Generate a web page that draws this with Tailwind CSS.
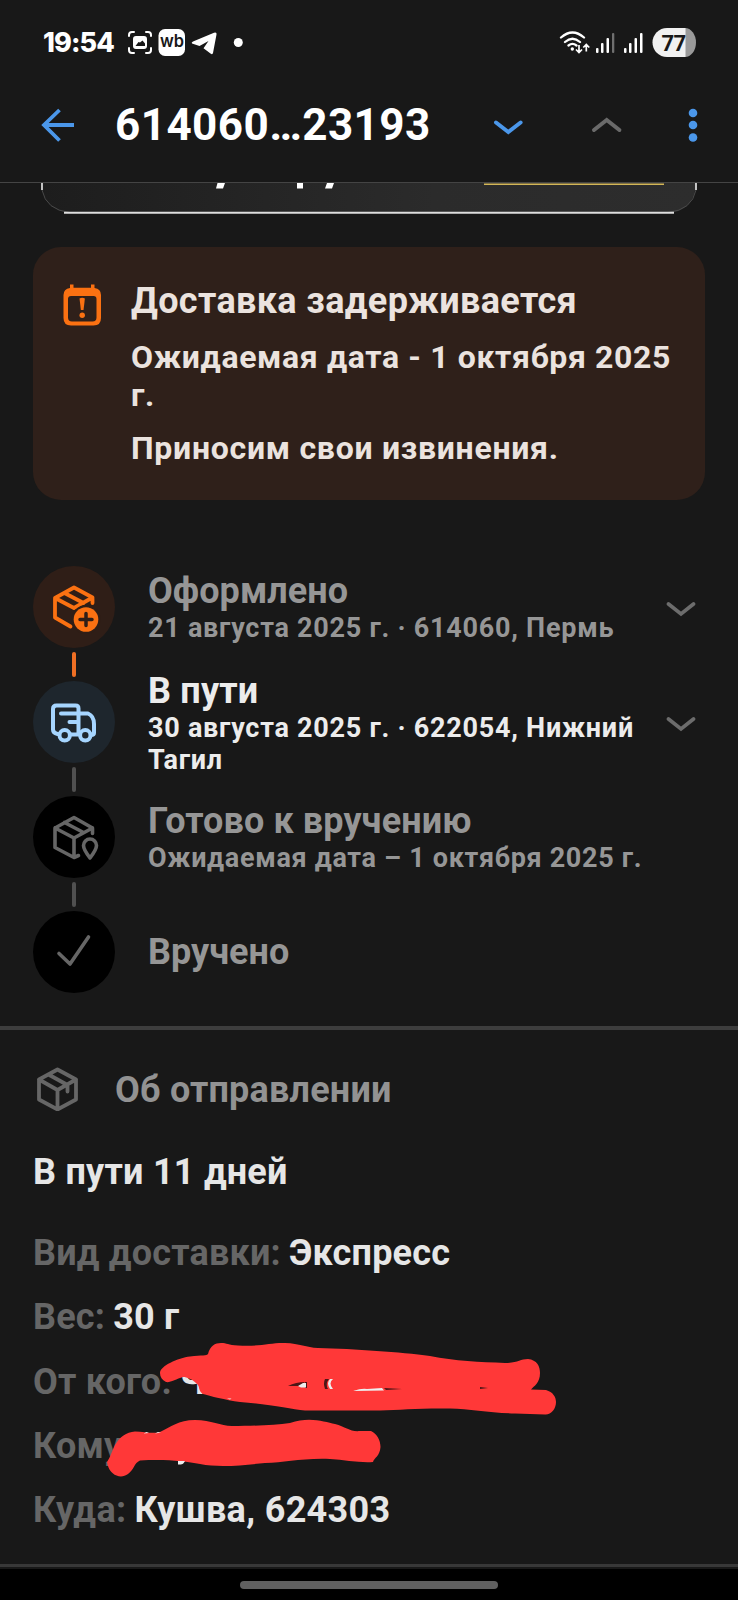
<!DOCTYPE html>
<html lang="ru">
<head>
<meta charset="utf-8">
<title>Отслеживание</title>
<script src="https://cdn.jsdelivr.net/npm/@tailwindcss/browser@4"></script>
</head>
<body class="bg-[#181818]">
<main class="relative flex h-[1600px] w-[738px] flex-col overflow-hidden bg-[#181818] font-[Roboto,sans-serif] font-bold text-[#e6e6e6]">

  <!-- status bar -->
  <div class="flex h-[84px] shrink-0 items-center pl-[43px] pr-[42px]">
    <span class="mt-[2px] w-[85px] font-[Inter,sans-serif] text-[27px] font-extrabold tracking-[-0.9px] text-white">19:54</span>
    <svg class="h-[27px] w-[115px] shrink-0" viewBox="128 29 115 27" fill="none">
      <g stroke="#fff" stroke-width="2" stroke-linecap="round">
        <path d="M129 36v-1q0-3 3-3h2M146 32h2q3 0 3 3v1M151 48v2q0 3-3 3h-2M134 53h-2q-3 0-3-3v-2"/>
      </g>
      <path fill="#fff" fill-rule="evenodd" d="M136 36h8q3 0 3 3v7q0 3-3 3h-8q-3 0-3-3v-7q0-3 3-3zM135.500 46h9.500v-2.500l-2.500-3-2.500 2-1.500-.5z"/>
      <rect x="158.500" y="29" width="26.500" height="27" rx="6.500" fill="#fff"/>
      <text x="160" y="47" font-family="Inter, sans-serif" font-size="17.500" font-weight="600" textLength="24" lengthAdjust="spacingAndGlyphs" fill="#181818">wb</text>
      <path fill="#fff" d="M192 43.500Q191 42.500 193 41.500L214 32.700Q217 31.800 216.500 34.500L213 53Q212.500 55 210.500 53.500L203.500 48.200L208.500 41L199.500 46z"/>
      <circle cx="238.300" cy="42.500" r="4.500" fill="#fff"/>
    </svg>
    <svg class="ml-auto h-[29px] w-[137px]" viewBox="559 28 137 29" fill="none">
      <g stroke="#fff" stroke-width="2.300" stroke-linecap="round">
        <path d="M561 37.500Q572.500 27.500 584 37.500M565 42Q572.500 35.500 580 42M568.500 45.500Q572.500 42.200 576.500 45.500"/>
      </g>
      <circle cx="572.300" cy="49" r="1.700" fill="#fff"/>
      <path stroke="#fff" stroke-width="1.700" d="M579 45v7M576 49.500l3 3 3-3M586.300 51.500v-6.500M583.300 47.500l3-3 3 3"/>
      <g fill="#fff">
        <rect x="596" y="48" width="2.500" height="5" rx="1"/><rect x="601" y="43" width="2.500" height="10" rx="1"/><rect x="606.500" y="38" width="2.500" height="15" rx="1"/><rect x="612" y="33" width="2.300" height="20" rx="1" fill="#6f6f6f"/>
        <rect x="624" y="48" width="2.500" height="5" rx="1"/><rect x="629" y="43" width="2.500" height="10" rx="1"/><rect x="634.500" y="38" width="2.500" height="15" rx="1"/><rect x="640" y="33" width="2.500" height="20" rx="1"/>
      </g>
      <path fill="#9a9a9a" d="M685 28a11 14.500 0 0 1 0 29z"/>
      <path fill="#f1f1f1" d="M667 28h18.500v29h-18.500a14.500 14.500 0 0 1 0-29z"/>
      <text x="661.500" y="50.500" font-family="Roboto, sans-serif" font-size="22" font-weight="700" textLength="24.500" fill="#181818">77</text>
    </svg>
  </div>

  <!-- title bar -->
  <header class="flex h-[99px] shrink-0 items-center border-b border-[#444] pl-[41px] pr-[38px]">
    <svg class="mt-[-16px] h-[34px] w-[34px]" viewBox="41 108 34 34" fill="none" stroke="#4b97ea" stroke-width="3.800"><path d="M74 125H43.500M59.500 110L44 125l15.500 15.500"/></svg>
    <h1 class="mt-[-16px] ml-[40px] w-[377px] text-[44px] leading-[52px] tracking-[0.45px] text-white">614060…23193</h1>
    <svg class="mt-[-16px] h-[36px] w-[208px]" viewBox="492 107 208 36" fill="none" stroke-width="4" stroke-linecap="round">
      <path stroke="#4b97ea" d="M496 122.500l12.300 9.500 12.300-9.500"/>
      <path stroke="#6a6a6a" d="M594 130l12.700-10 12.700 10"/>
      <g fill="#4b97ea"><circle cx="693" cy="113" r="4.300"/><circle cx="693" cy="125" r="4.300"/><circle cx="693" cy="137.500" r="4.300"/></g>
    </svg>
  </header>

  <!-- scrolled-off banner -->
  <div class="flex h-[31px] shrink-0 justify-center">
    <svg class="h-[31px] w-[658px]" viewBox="40 183 658 31" fill="none">
      <defs><linearGradient id="g" x1="0" x2="1"><stop offset="0" stop-color="#1d1d1d"/><stop offset=".6" stop-color="#2b2b2b"/><stop offset="1" stop-color="#2d2d2d"/></linearGradient></defs>
      <path fill="url(#g)" d="M42 183q2 29 29 30h596q27-1 29-30z"/>
      <path stroke="#4a4a4a" d="M42 190q4 20 28 22.500M696 190q-4 20-28 22.500"/>
      <path stroke="#eee" stroke-width="1.600" d="M42 183v7M696 183v7"/>
      <path stroke="#dedede" stroke-width="2" d="M64 212.700h610"/>
      <path fill="#fff" d="M217.500 183h7.500l-2 5.500h-7zM297 183h6v5.500h-6zM327 183h7l-2 5.500h-7z"/>
      <path stroke="#d3b657" stroke-width="1.500" d="M484 184.300h180"/>
    </svg>
  </div>

  <!-- delay notice -->
  <section class="mx-[33px] mt-[33px] flex h-[253px] shrink-0 rounded-[28px] bg-[#2f201a] pl-[30px] text-[#ebe3df]">
    <svg class="mt-[37px] h-[42px] w-[38px] shrink-0" viewBox="63 284 38 42" fill="none">
      <path fill="#fb7112" fill-rule="evenodd" d="M70 284.500h3.500v3.300h17.500v-3.300h3.500v3.500Q101 289 101 295v23q0 7.500-7.500 7.500h-22.500q-7.500 0-7.500-7.500v-23q0-6 6.500-7zM71 296q-3 0-3 3v18.500q0 4 4 4h20.500q4 0 4-4v-18.500q0-3-3-3z"/>
      <path fill="#fb7112" d="M79.500 298.500q2.700-1.500 5.400 0l-1.400 11.500h-2.600z"/><circle cx="82.200" cy="315.300" r="2.700" fill="#fb7112"/>
    </svg>
    <div class="ml-[30px] pt-[33px]">
      <h2 class="text-[36px] leading-[42px] tracking-[0.36px]">Доставка задерживается</h2>
      <p class="mt-[16px] text-[32px] leading-[38px] tracking-[0.64px]">Ожидаемая дата - 1 октября 2025<br>г.</p>
      <p class="mt-[15px] text-[32px] leading-[38px] tracking-[0.72px]">Приносим свои извинения.</p>
    </div>
  </section>

  <!-- tracking timeline -->
  <section class="mt-[66px] flex h-[460px] shrink-0 flex-col gap-[33px] px-[33px] text-[#969696]">
    <div class="flex h-[82px] items-center">
      <div class="relative h-[82px] w-[82px] shrink-0 rounded-full bg-[#2f1e17]">
        <svg class="h-[82px] w-[82px]" viewBox="33 566 82 82" fill="none" stroke="#fb7112" stroke-width="3.800" stroke-linejoin="round" stroke-linecap="round">
          <path d="M92.500 603v-5.500L74 587.500 55 598V617.500L70.500 626.500M55 598l19 10 18.500-10.500M64.500 593l19 10"/>
          <circle cx="86" cy="619.500" r="14.500" fill="#2f1e17" stroke="none"/>
          <circle cx="86" cy="619.500" r="12.300" fill="#fb7112" stroke="none"/>
          <path stroke="#2f1e17" stroke-width="3.500" d="M86 613.500v12M80 619.500h12"/>
        </svg>
        <div class="absolute top-[86px] left-[39px] h-[25px] w-[4px] rounded-full bg-[#ef6f24]"></div>
      </div>
      <div class="ml-[33px] grow whitespace-nowrap"><h3 class="text-[36px] leading-[42px] tracking-[0.05px]">Оформлено</h3><p class="text-[27px] leading-[32px] tracking-[0.74px]">21 августа 2025 г. · 614060, Пермь</p></div>
      <svg class="mt-[3px] mr-[9px] h-[16px] w-[30px]" viewBox="0 0 30 16" fill="none" stroke="#6c6c6c" stroke-width="3.700" stroke-linecap="round"><path d="M2.500 3l12.500 10 12.500-10"/></svg>
    </div>
    <div class="flex h-[82px] items-center">
      <div class="relative h-[82px] w-[82px] shrink-0 rounded-full bg-[#1e262d]">
        <svg class="h-[82px] w-[82px]" viewBox="33 681 82 82" fill="none" stroke="#a6d5ff" stroke-width="4" stroke-linejoin="round" stroke-linecap="round">
          <path d="M57.500 734q-4.500-1-4.500-4.500v-20.500q0-3.500 3.500-3.500h19q3 0 3 3V734M61 713.500h27q6 2.500 6 10.500v9q0 2-3 2M69.500 722h9M71 734.500h8"/>
          <circle cx="64.700" cy="735.300" r="5.200"/><circle cx="85.300" cy="735.300" r="5.200"/>
        </svg>
        <div class="absolute top-[86px] left-[39px] h-[25px] w-[4px] rounded-full bg-[#505050]"></div>
      </div>
      <div class="ml-[33px] mt-px grow whitespace-nowrap text-[#ececec]"><h3 class="text-[36px] leading-[42px] tracking-[0.2px]">В пути</h3><p class="text-[27px] leading-[32px] tracking-[0.74px]">30 августа 2025 г. · 622054, Нижний<br>Тагил</p></div>
      <svg class="mt-[3px] mr-[9px] h-[16px] w-[30px]" viewBox="0 0 30 16" fill="none" stroke="#6c6c6c" stroke-width="3.700" stroke-linecap="round"><path d="M2.500 3l12.500 10 12.500-10"/></svg>
    </div>
    <div class="flex h-[82px] items-center">
      <div class="relative h-[82px] w-[82px] shrink-0 rounded-full bg-black">
        <svg class="h-[82px] w-[82px]" viewBox="33 796 82 82" fill="none" stroke="#666" stroke-width="3.600" stroke-linejoin="round" stroke-linecap="round">
          <path d="M92.500 833.500v-5.500L74 817.500 55 828V847.500L74 857.500L78.500 855.500M74 857V838L55 828M74 838l18.500-10M64.500 822.500l19 10"/>
          <path d="M90 858q-6.500-8.500-6.500-12.500a6.500 6.500 0 0 1 13 0q0 4-6.500 12.500z"/>
        </svg>
        <div class="absolute top-[86px] left-[39px] h-[25px] w-[4px] rounded-full bg-[#505050]"></div>
      </div>
      <div class="ml-[33px] grow whitespace-nowrap"><h3 class="text-[36px] leading-[42px] tracking-[0.1px]">Готово к вручению</h3><p class="text-[27px] leading-[32px] tracking-[0.68px]">Ожидаемая дата – 1 октября 2025 г.</p></div>
    </div>
    <div class="flex h-[82px] items-center">
      <div class="h-[82px] w-[82px] shrink-0 rounded-full bg-black">
        <svg class="h-[82px] w-[82px]" viewBox="33 911 82 82" fill="none" stroke="#666" stroke-width="3.600" stroke-linecap="round" stroke-linejoin="round"><path d="M59 953.500l11 10.500 18.500-27"/></svg>
      </div>
      <h3 class="ml-[33px] text-[36px] leading-[42px]">Вручено</h3>
    </div>
  </section>

  <!-- parcel details -->
  <section class="flex h-[541px] shrink-0 flex-col border-t-4 border-b-[3px] border-t-[#3d3d3d] border-b-[#383838] px-[33px] text-[36px] leading-[42px] tracking-[0.2px]">
    <div class="mt-[38px] flex h-[44px] items-center">
      <svg class="ml-[3px] mt-[-2px] h-[44px] w-[43px]" viewBox="36 1066 43 44" fill="none" stroke="#666" stroke-width="3.800" stroke-linejoin="round" stroke-linecap="round">
        <path d="M57.500 1068.500L76 1078.500V1098.500L57.500 1108.500 39 1098.500V1078.500zM39 1078.500l18.500 10.500 18.500-10.500M57.500 1089v19M48.500 1073.500l19 10.500v6.500"/>
      </svg>
      <h2 class="ml-[36px] text-[#929292]">Об отправлении</h2>
    </div>
    <p class="mt-[39px] tracking-[0.25px]">В пути 11 дней</p>
    <dl class="mt-[39px] flex flex-col gap-[22.300px] whitespace-nowrap">
      <div class="flex"><dt class="mr-[8px] text-[#666]">Вид доставки:</dt><dd>Экспресс</dd></div>
      <div class="flex"><dt class="mr-[8px] text-[#666]">Вес:</dt><dd>30 г</dd></div>
      <div class="flex"><dt class="mr-[8px] text-[#666]">От кого:</dt><dd>Ч</dd></div>
      <div class="flex"><dt class="mr-[8px] text-[#666]">Кому:</dt></div>
      <div class="flex tracking-[0.33px]"><dt class="mr-[8px] text-[#666]">Куда:</dt><dd>Кушва, 624303</dd></div>
    </dl>
  </section>

  <!-- gesture bar -->
  <div class="mt-[2px] flex grow justify-center bg-black pt-[12px]"><div class="h-[8px] w-[258px] rounded-full bg-[#606060]"></div></div>

  <!-- marker strokes over the names -->
  <svg class="absolute top-[1335px] left-[100px] h-[145px] w-[470px]" viewBox="100 1335 470 145">
    <path fill="#ff3838" d="M160 1373C160 1366 178 1358 190 1356.500S207 1356 208 1354C210 1346 215 1343 221 1343S228 1345 238 1345.500C260 1347 270 1342.500 285 1343S306 1347.500 318 1348C355 1349 400 1352 430 1356C455 1361 480 1362 505 1363C518 1363 520 1359 528 1359C537 1360 540 1366 540 1373C540 1383 534 1386 531 1389.500L546 1390C553 1392 556 1397 556 1402C556 1409 551 1415 545 1414.500L515 1413.500C490 1413 470 1409 450 1408.500C420 1408 400 1410 380 1410.500H305C290 1409 270 1404 240 1402C225 1400 210 1396 203 1394C198 1391 200 1386 197 1384C192 1379 187 1377 183 1377C176 1379 170 1383 166 1382C162 1380 160 1377 160 1373z"/>
    <path fill="#ff3838" d="M107 1462C110 1458 112 1451 115 1445C120 1437 126 1432 135 1431.500C145 1432 153 1434 160 1432C171 1427 178 1420 195 1420S220 1426 232 1426C255 1426 275 1425 290 1423C310 1416 325 1422 335 1424C346 1427 350 1432 360 1431L371 1431C377 1434 380.500 1440 380.500 1447C380 1456 374 1458 373 1462C360 1463 345 1460 330 1459C300 1458 285 1463 265 1463C245 1465 220 1468 200 1464C185 1461 165 1459 140 1460.500C134 1463 134 1470 128 1474C120 1480 110 1474 108 1466z"/>
    <path fill="#4c1717" d="M288 1386q8-4 17-4l-5 4zM325 1379h4q-4 5-1 10h-3q-2-6 0-10zM305 1382h2v6h-2zM384 1388l18 1-16 1zM480 1387l8 1-8 1z"/>
    <path fill="#eee" d="M143.500 1433.500l3-1.500 2.500 1zM155 1433.500l3-1.500 3 .5zM178 1461h7q-2 4-5 3.500h-2zM227 1398.500h4.500l-1.500 1zM298 1386l5-3h3v4.500h-5zM333 1379q-5 4 0 10h-3q-4-6 0-10zM353 1391q9-3 14-2l15-1 2 2.500z"/>
  </svg>
</main>
</body>
</html>
